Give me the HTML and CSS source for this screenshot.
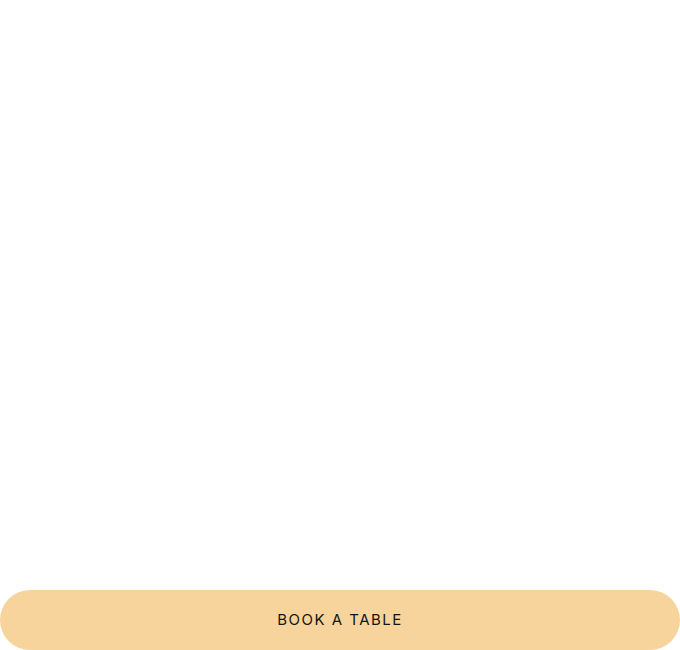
FILE: index.html
```html
<!DOCTYPE html>
<html lang="en">
<head>
<meta charset="utf-8">
<title>Book a table</title>
<link rel="stylesheet" href="styles.css">
</head>
<body>
<main class="page">
  <div class="spacer"></div>
  <a class="book-btn" href="#">BOOK A TABLE</a>
</main>
</body>
</html>
```
FILE: styles.css
```css
html, body {
  margin: 0;
  padding: 0;
  background: #ffffff;
}
.page {
  display: flex;
  flex-direction: column;
  height: 650px;
  width: 680px;
}
.spacer {
  flex: 1;
}
.book-btn {
  display: flex;
  align-items: center;
  justify-content: center;
  height: 60px;
  box-sizing: border-box;
  padding-bottom: 2px;
  border-radius: 30px;
  background: #f7d49c;
  color: #141414;
  font-family: "Inter", "Liberation Sans", sans-serif;
  font-size: 15px;
  font-weight: 400;
  letter-spacing: 1.5px;
  text-decoration: none;
}
```
